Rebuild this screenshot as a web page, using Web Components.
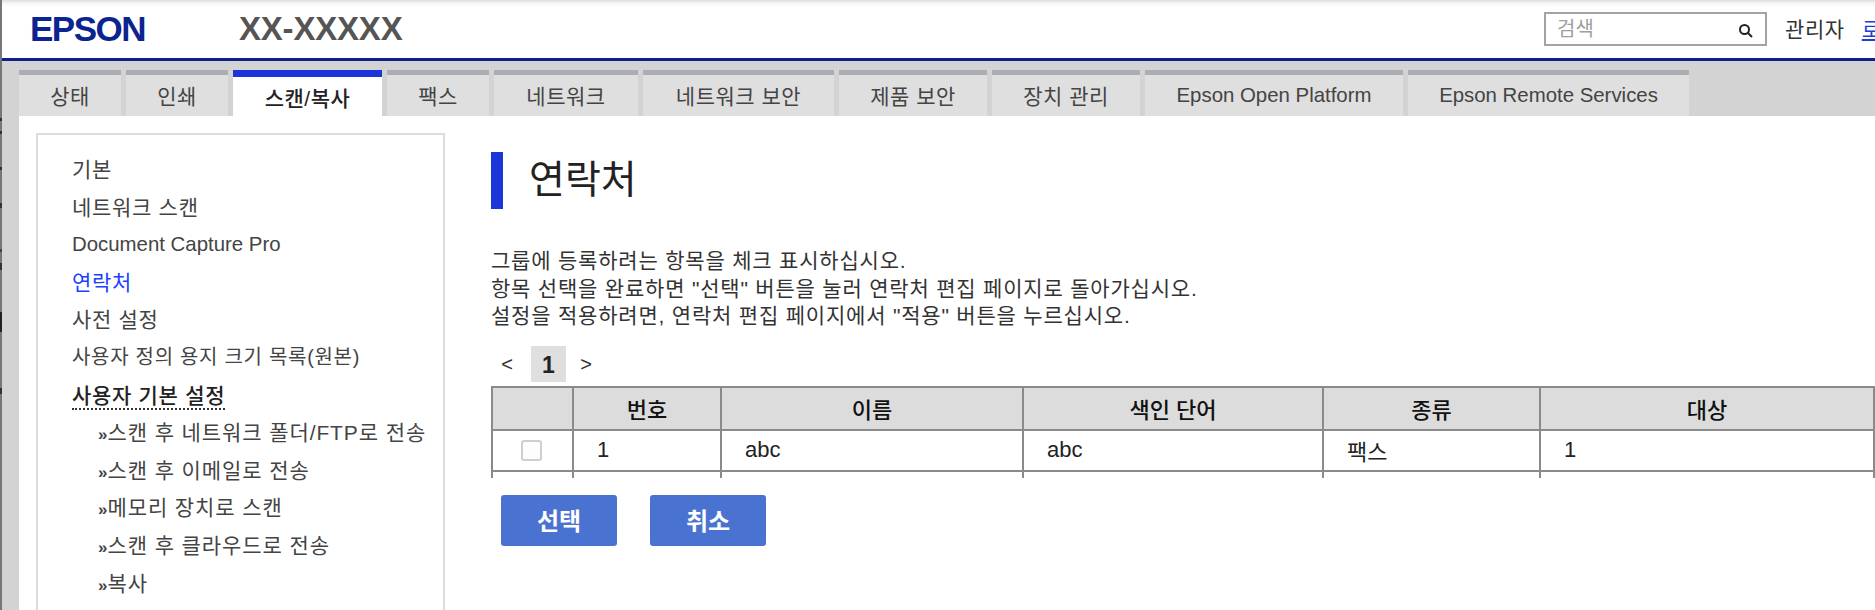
<!DOCTYPE html>
<html lang="ko">
<head>
<meta charset="utf-8">
<title>EPSON</title>
<style>
html, body { margin: 0; height: 100%; overflow: hidden; }
body {
    width: 1875px;
    height: 610px;
    background: #d3d3d3;
    font-family: "Liberation Sans", "Noto Sans CJK KR", sans-serif;
    color: #333;
}
/* window edge that shows in the screenshot */
body::before {
    content: "";
    position: fixed;
    left: 0;
    top: 0;
    z-index: 2;
    width: 2px;
    height: 610px;
    background: linear-gradient(#777 0 118px, #333 118px 121px, #777 121px 131px, #333 131px 134px, #777 134px 167px, #333 167px 170px, #777 170px 203px, #333 203px 208px, #777 208px 249px, #444 249px 252px, #777 252px 263px, #333 263px 270px, #777 270px 312px, #222 312px 332px, #777 332px 388px, #333 388px 394px, #777 394px);
}
</style>
</head>
<body>
<web-header></web-header>
<tab-bar>
    <tab-item w="102">상태</tab-item>
    <tab-item w="102">인쇄</tab-item>
    <tab-item w="149" active>스캔/복사</tab-item>
    <tab-item w="102">팩스</tab-item>
    <tab-item w="144">네트워크</tab-item>
    <tab-item w="191">네트워크 보안</tab-item>
    <tab-item w="148">제품 보안</tab-item>
    <tab-item w="148">장치 관리</tab-item>
    <tab-item w="258" latin>Epson Open Platform</tab-item>
    <tab-item w="281" latin>Epson Remote Services</tab-item>
</tab-bar>
<main-area>
    <side-menu slot="menu">
        <menu-link>기본</menu-link>
        <menu-link>네트워크 스캔</menu-link>
        <menu-link latin>Document Capture Pro</menu-link>
        <menu-link current>연락처</menu-link>
        <menu-link>사전 설정</menu-link>
        <menu-link tight>사용자 정의 용지 크기 목록(원본)</menu-link>
        <menu-link group>사용자 기본 설정</menu-link>
        <menu-link sub>스캔 후 네트워크 폴더/FTP로 전송</menu-link>
        <menu-link sub>스캔 후 이메일로 전송</menu-link>
        <menu-link sub>메모리 장치로 스캔</menu-link>
        <menu-link sub>스캔 후 클라우드로 전송</menu-link>
        <menu-link sub>복사</menu-link>
    </side-menu>
    <contact-panel></contact-panel>
</main-area>

<script>
class WebHeader extends HTMLElement {
    constructor() {
        super();
        this.attachShadow({mode: "open"}).innerHTML = `
        <style>
        :host {
            display: flex;
            align-items: center;
            height: 58px;
            box-sizing: content-box;
            border-bottom: 3px solid #0b1f8e;
            background: linear-gradient(#dcdfdf 0, #f4f5f5 3px, #fff 7px);
            overflow: hidden;
        }
        .logo {
            margin-left: 30px;
            width: 209px;
            font: bold 35px "Liberation Sans", sans-serif;
            letter-spacing: -1.5px;
            color: #0b2490;
        }
        .model {
            font: bold 33px "Liberation Sans", sans-serif;
            color: #555;
            letter-spacing: -.2px;
        }
        .search {
            margin-left: auto;
            display: flex;
            align-items: center;
            justify-content: space-between;
            box-sizing: border-box;
            width: 223px;
            height: 34px;
            padding: 0 11px 0 11px;
            border: 2px solid #a3a3a3;
            color: #a0a0a0;
            font-size: 20px;
        }
        .search span { margin-top: -4px; }
        .search svg { display: block; margin-top: 4px; }
        .user {
            display: flex;
            flex: none;
            width: 90px;
            margin-left: 18px;
            font-size: 21px;
            letter-spacing: .6px;
            color: #333;
            white-space: nowrap;
        }
        .user span { margin-top: -2px; }
        a { margin-left: 17px; margin-top: -2px; color: #1a3fd8; text-decoration: underline; }
        </style>
        <div class="logo">EPSON</div>
        <div class="model">XX-XXXXX</div>
        <div class="search">
            <span>검색</span>
            <svg width="16" height="16" viewBox="0 0 16 16" fill="none" stroke="#222" stroke-width="2">
                <circle cx="6.5" cy="6.5" r="4.5"/><path d="M10 10l4 4"/>
            </svg>
        </div>
        <div class="user"><span>관리자</span><a>로그아웃</a></div>`;
    }
}

class TabBar extends HTMLElement {
    constructor() {
        super();
        this.attachShadow({mode: "open"}).innerHTML = `
        <style>
        :host {
            display: flex;
            gap: 5px;
            height: 46px;
            padding: 9px 0 0 19px;
            background: #d3d3d3;
        }
        </style>
        <slot></slot>`;
    }
}

class TabItem extends HTMLElement {
    constructor() {
        super();
        this.attachShadow({mode: "open"}).innerHTML = `
        <style>
        :host {
            display: flex;
            flex: none;
            align-items: center;
            justify-content: center;
            box-sizing: border-box;
            padding-bottom: 2px;
            border-top: 5px solid #aaadb2;
            background: #dfdfdf;
            font-size: 21px;
            letter-spacing: .5px;
            color: #444;
            white-space: nowrap;
        }
        :host([latin]) { font-size: 20.4px; letter-spacing: 0; padding-bottom: 0; }
        :host([active]) {
            border-top: 7px solid #1c35d8;
            background: #fff;
            color: #222;
            font-weight: 500;
            padding-bottom: 0;
        }
        </style>
        <slot></slot>`;
    }
    connectedCallback() {
        this.style.width = this.getAttribute("w") + "px";
    }
}

class MainArea extends HTMLElement {
    constructor() {
        super();
        this.attachShadow({mode: "open"}).innerHTML = `
        <style>
        :host {
            display: grid;
            grid-template-columns: 409px 1fr;
            column-gap: 46px;
            height: 494px;
            margin-left: 19px;
            padding: 17px 0 0 17px;
            box-sizing: border-box;
            background: #fff;
            overflow: hidden;
        }
        </style>
        <slot name="menu"></slot>
        <slot></slot>`;
    }
}

class SideMenu extends HTMLElement {
    constructor() {
        super();
        this.attachShadow({mode: "open"}).innerHTML = `
        <style>
        :host {
            display: block;
            box-sizing: border-box;
            height: 600px;
            padding: 16px 0 0 34px;
            border: 2px solid #dcdcdc;
        }
        </style>
        <slot></slot>`;
    }
}

class MenuLink extends HTMLElement {
    constructor() {
        super();
        this.attachShadow({mode: "open"}).innerHTML = `
        <style>
        :host {
            display: block;
            height: 37.6px;
            line-height: 37.6px;
            font-size: 21px;
            letter-spacing: .7px;
            color: #444;
            white-space: nowrap;
        }
        :host([tight]) { font-size: 20px; letter-spacing: .7px; }
        :host([latin]) { font-size: 20.4px; letter-spacing: 0; }
        :host([current]) { color: #1a3fff; }
        :host([group]) { color: #222; font-weight: 500; }
        :host([group]) span { border-bottom: 2px dotted #333; padding-bottom: 1px; }
        :host([sub]) { padding-left: 26px; letter-spacing: .9px; }
        .mark { display: none; font-size: 17px; font-weight: 700; letter-spacing: 0; }
        :host([sub]) .mark { display: inline; }
        </style>
        <span class="mark">»</span><span><slot></slot></span>`;
    }
}

class ContactPanel extends HTMLElement {
    constructor() {
        super();
        this.attachShadow({mode: "open"}).innerHTML = `
        <style>
        :host {
            display: block;
            width: 1384px;
            font-size: 21px;
            color: #333;
        }
        h1 {
            display: flex;
            align-items: center;
            height: 57px;
            margin: 19px 0 0;
            padding: 0 0 10px 26px;
            box-sizing: border-box;
            border-left: 12px solid #1c35d8;
            font-size: 39px;
            font-weight: 400;
            color: #222;
        }
        .intro { margin: 38px 0 0; line-height: 27.5px; letter-spacing: .8px; white-space: nowrap; }
        .pager {
            display: flex;
            align-items: center;
            height: 36px;
            margin-top: 16px;
            font-size: 20px;
        }
        .pager span { width: 40px; text-align: center; padding-top: 2px; }
        .pager span:first-child { padding-right: 8px; width: 32px; }
        .pager b {
            width: 35px;
            height: 36px;
            line-height: 38px;
            text-align: center;
            background: #dfdfdf;
            font-size: 23px;
            color: #222;
        }
        .clip { height: 92px; margin-top: 4px; overflow: hidden; }
        table {
            width: 1384px;
            table-layout: fixed;
            border-collapse: collapse;
            font-size: 22px;
        }
        th, td { border: 2px solid #8a8a8a; padding: 0; }
        th { height: 41px; background: #dcdcdc; font-weight: 500; color: #111; font-size: 22px; }
        td { height: 39px; padding-left: 23px; color: #222; }
        td.check { padding: 0; }
        .box {
            display: block;
            box-sizing: border-box;
            width: 21px;
            height: 21px;
            margin: 0 0 0 28px;
            border: 2px solid #cfcfcf;
            border-radius: 3px;
            background: #fdfdfd;
        }
        .buttons { display: flex; gap: 33px; margin: 17px 0 0 10px; }
        .btn {
            display: flex;
            align-items: center;
            justify-content: center;
            width: 116px;
            height: 51px;
            padding-bottom: 2px;
            box-sizing: border-box;
            border-radius: 3px;
            background: #4a72d1;
            color: #fff;
            font-size: 24px;
            font-weight: 700;
        }
        </style>
        <h1>연락처</h1>
        <p class="intro">그룹에 등록하려는 항목을 체크 표시하십시오.<br>항목 선택을 완료하면 "선택" 버튼을 눌러 연락처 편집 페이지로 돌아가십시오.<br>설정을 적용하려면, 연락처 편집 페이지에서 "적용" 버튼을 누르십시오.</p>
        <div class="pager"><span>&lt;</span><b>1</b><span>&gt;</span></div>
        <div class="clip">
            <table>
                <colgroup><col style="width:81px"><col style="width:148px"><col style="width:302px"><col style="width:300px"><col style="width:217px"><col></colgroup>
                <tr><th></th><th>번호</th><th>이름</th><th>색인 단어</th><th>종류</th><th>대상</th></tr>
                <tr><td class="check"><span class="box"></span></td><td>1</td><td>abc</td><td>abc</td><td>팩스</td><td>1</td></tr>
                <tr><td class="check"></td><td></td><td></td><td></td><td></td><td></td></tr>
            </table>
        </div>
        <div class="buttons"><div class="btn">선택</div><div class="btn">취소</div></div>`;
    }
}

customElements.define("web-header", WebHeader);
customElements.define("tab-bar", TabBar);
customElements.define("tab-item", TabItem);
customElements.define("main-area", MainArea);
customElements.define("side-menu", SideMenu);
customElements.define("menu-link", MenuLink);
customElements.define("contact-panel", ContactPanel);
</script>
</body>
</html>
